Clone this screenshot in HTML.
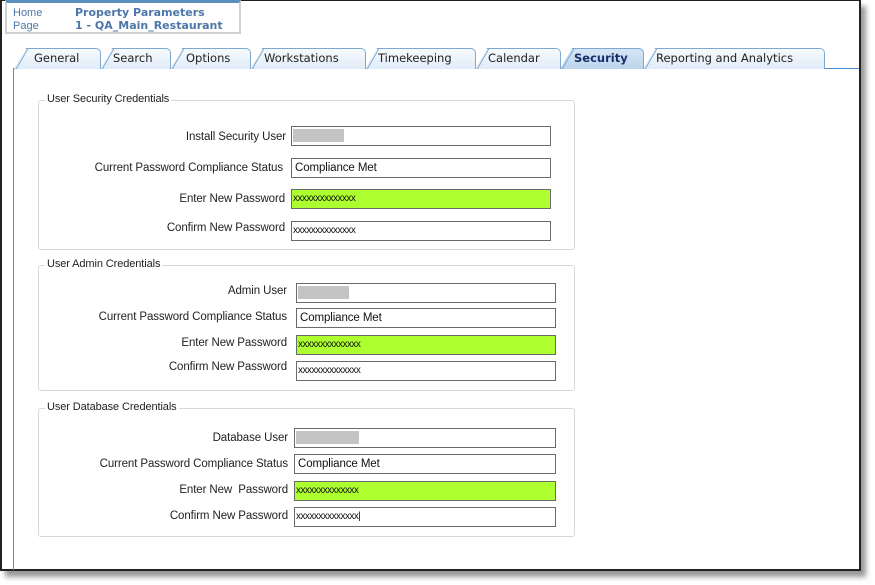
<!DOCTYPE html>
<html><head><meta charset="utf-8"><style>
*{margin:0;padding:0;box-sizing:border-box}
body{width:875px;height:585px;background:#fff;position:relative;overflow:hidden;font-family:"Liberation Sans",sans-serif}
.frame{position:absolute;left:0;top:0;width:861px;height:571px;border:1px solid #222;border-width:1px 2px 2px 2px;background:#fff;box-shadow:5px 6px 5px #999}
.a{position:absolute}
.hdr{left:5px;top:0;width:236px;height:34px;border:2px solid #d0d0d0;border-top:3px solid #5b8fc0;font-size:11px;color:#4d77a8}
.tab{position:absolute;top:48px;height:21px;border:1px solid #7fa8cf;border-bottom:none;border-radius:0 5px 0 0;background:linear-gradient(#f6fafd,#e0ecf8);font-family:"DejaVu Sans",sans-serif;font-size:11.5px;color:#222;padding-left:12px;line-height:19px;clip-path:polygon(12px 0,100% 0,100% 100%,0 100%)}
.tab:before{content:"";position:absolute;left:0;top:0;width:1px;height:26px;background:#7fa8cf;transform-origin:0 100%;transform:translate(0px,-5px) rotate(30deg)}
.tab.act{background:linear-gradient(#d6e6f6,#bcd4ec);font-weight:bold;color:#1a2e6a}
.panel{left:13px;top:68px;width:846px;height:502px;border-left:1px solid #4a90d0;border-top:1px solid #4a90d0}
.fs{position:absolute;left:38px;width:537px;border:1px solid #d8d8d8;border-radius:3px}
.lg{position:absolute;font-size:11px;color:#222;background:#fff;padding:0 2px;letter-spacing:-0.1px}
.lb{position:absolute;font-size:11.5px;color:#222;text-align:right;letter-spacing:-0.1px;white-space:nowrap}
.in{position:absolute;height:20px;border:1px solid #6a6a6a;background:#fff;font-size:11.5px;padding-left:3px;line-height:18px;color:#111;letter-spacing:-0.1px}
.g{background:#adff2f}
.pw{font-size:10px;letter-spacing:-0.55px;padding-left:1px}
.gr{position:absolute;background:#c4c4c4;height:13px;top:2px;left:1px}
</style></head><body>
<div class="frame"></div>
<div class="a hdr">
 <div class="a" style="left:6px;top:4px">Home</div><div class="a" style="left:6px;top:17px">Page</div>
 <div class="a" style="left:68px;top:3px;font-weight:bold;font-family:'DejaVu Sans',sans-serif;font-size:11px">Property Parameters</div>
 <div class="a" style="left:68px;top:16px;font-weight:bold;font-family:'DejaVu Sans',sans-serif;font-size:11px">1 - QA_Main_Restaurant</div>
</div>
<div class="a panel"></div>
<div class="a" style="left:13px;top:68px;width:846px;height:1px;background:#4a90d0"></div>
<div class="tab" style="left:14px;width:87px;padding-left:19px">General</div>
<div class="tab" style="left:100px;width:71px">Search</div>
<div class="tab" style="left:170px;width:81px;padding-left:15px">Options</div>
<div class="tab" style="left:250px;width:116px;padding-left:13px">Workstations</div>
<div class="tab" style="left:365px;width:111px">Timekeeping</div>
<div class="tab" style="left:475px;width:86px">Calendar</div>
<div class="tab act" style="left:560px;width:84px;padding-left:13px">Security</div>
<div class="tab" style="left:643px;width:182px;padding-left:12px">Reporting and Analytics</div>

<div class="fs" style="top:100px;height:150px"></div>
<div class="lg" style="left:45px;top:93px">User Security Credentials</div>
<div class="lb" style="right:589px;top:131px">Install Security User</div>
<div class="in" style="left:291px;top:126px;width:260px"><div class="gr" style="width:51px"></div></div>
<div class="lb" style="right:592px;top:162px">Current Password Compliance Status</div>
<div class="in" style="left:291px;top:158px;width:260px">Compliance Met</div>
<div class="lb" style="right:590px;top:193px">Enter New Password</div>
<div class="in g pw" style="left:291px;top:189px;width:260px">xxxxxxxxxxxxxx</div>
<div class="lb" style="right:590px;top:222px">Confirm New Password</div>
<div class="in pw" style="left:291px;top:221px;width:260px">xxxxxxxxxxxxxx</div>

<div class="fs" style="top:265px;height:126px"></div>
<div class="lg" style="left:45px;top:258px">User Admin Credentials</div>
<div class="lb" style="right:588px;top:285px">Admin User</div>
<div class="in" style="left:296px;top:283px;width:260px"><div class="gr" style="width:51px"></div></div>
<div class="lb" style="right:588px;top:311px">Current Password Compliance Status</div>
<div class="in" style="left:296px;top:308px;width:260px">Compliance Met</div>
<div class="lb" style="right:588px;top:337px">Enter New Password</div>
<div class="in g pw" style="left:296px;top:335px;width:260px">xxxxxxxxxxxxxx</div>
<div class="lb" style="right:588px;top:361px">Confirm New Password</div>
<div class="in pw" style="left:296px;top:361px;width:260px">xxxxxxxxxxxxxx</div>

<div class="fs" style="top:408px;height:129px"></div>
<div class="lg" style="left:45px;top:401px">User Database Credentials</div>
<div class="lb" style="right:587px;top:432px">Database User</div>
<div class="in" style="left:294px;top:428px;width:262px"><div class="gr" style="width:63px"></div></div>
<div class="lb" style="right:587px;top:458px">Current Password Compliance Status</div>
<div class="in" style="left:294px;top:454px;width:262px">Compliance Met</div>
<div class="lb" style="right:587px;top:484px">Enter New &nbsp;Password</div>
<div class="in g pw" style="left:294px;top:481px;width:262px">xxxxxxxxxxxxxx</div>
<div class="lb" style="right:587px;top:510px">Confirm New Password</div>
<div class="in pw" style="left:294px;top:507px;width:262px">xxxxxxxxxxxxxx|</div>
</body></html>
